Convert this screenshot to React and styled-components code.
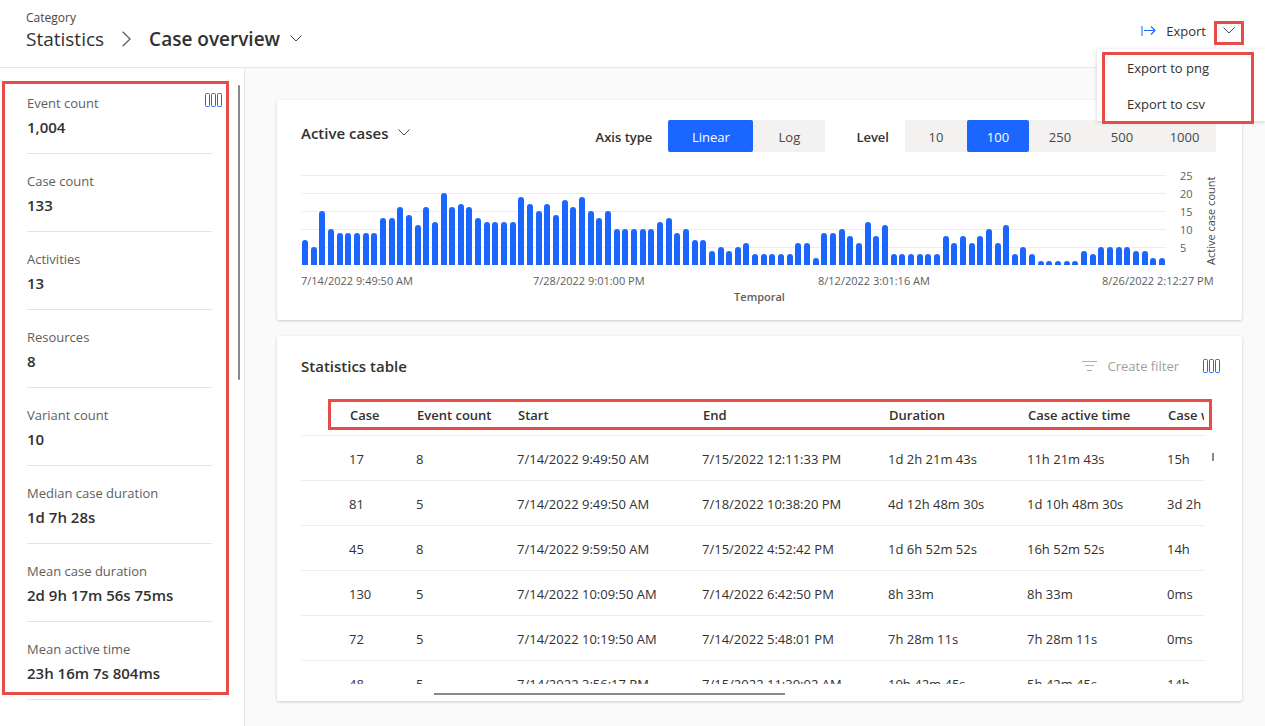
import React from 'react';
import styled, { createGlobalStyle } from 'styled-components';

const stats = [
  { label: 'Event count', value: '1,004' },
  { label: 'Case count', value: '133' },
  { label: 'Activities', value: '13' },
  { label: 'Resources', value: '8' },
  { label: 'Variant count', value: '10' },
  { label: 'Median case duration', value: '1d 7h 28s' },
  { label: 'Mean case duration', value: '2d 9h 17m 56s 75ms' },
  { label: 'Mean active time', value: '23h 16m 7s 804ms' }
];

const activeCases = [
  7, 5, 15, 10, 9, 9, 9, 9, 9, 13, 13, 16, 14, 11, 16, 12, 20, 16, 17, 16,
  13, 12, 12, 12, 12, 19, 17, 15, 17, 14, 18, 16, 19, 15, 13, 15, 10, 10, 10, 10,
  10, 12, 13, 9, 10, 7, 7, 4, 5, 4, 5, 6, 3, 3, 3, 3, 3, 6, 6, 2,
  9, 9, 10, 8, 6, 12, 8, 11, 3, 3, 3, 3, 3, 3, 8, 6, 8, 6, 8, 10,
  6, 11, 3, 5, 3, 1, 1, 1, 1, 1, 4, 3, 5, 5, 5, 5, 4, 4, 2, 2
];

const maxCount = 25;
const countTicks = [25, 20, 15, 10, 5];
const timeTicks = [
  '7/14/2022 9:49:50 AM',
  '7/28/2022 9:01:00 PM',
  '8/12/2022 3:01:16 AM',
  '8/26/2022 2:12:27 PM'
];

const columns = [
  { title: 'Case', width: 67 },
  { title: 'Event count', width: 101 },
  { title: 'Start', width: 185 },
  { title: 'End', width: 186 },
  { title: 'Duration', width: 139 },
  { title: 'Case active time', width: 140 },
  { title: 'Case waiting time', width: 150 }
];

const rows = [
  ['17', '8', '7/14/2022 9:49:50 AM', '7/15/2022 12:11:33 PM', '1d 2h 21m 43s', '11h 21m 43s', '15h'],
  ['81', '5', '7/14/2022 9:49:50 AM', '7/18/2022 10:38:20 PM', '4d 12h 48m 30s', '1d 10h 48m 30s', '3d 2h'],
  ['45', '8', '7/14/2022 9:59:50 AM', '7/15/2022 4:52:42 PM', '1d 6h 52m 52s', '16h 52m 52s', '14h'],
  ['130', '5', '7/14/2022 10:09:50 AM', '7/14/2022 6:42:50 PM', '8h 33m', '8h 33m', '0ms'],
  ['72', '5', '7/14/2022 10:19:50 AM', '7/14/2022 5:48:01 PM', '7h 28m 11s', '7h 28m 11s', '0ms'],
  ['48', '5', '7/14/2022 3:56:17 PM', '7/15/2022 11:39:02 AM', '19h 42m 45s', '5h 42m 45s', '14h']
];

const ChevronDown = () => (
  <svg width="12" height="7" viewBox="0 0 12 7" fill="none" stroke="#484644">
    <path d="M0.5 0.5 L6 6 L11.5 0.5" />
  </svg>
);

const ChevronRight = () => (
  <svg width="9" height="16" viewBox="0 0 9 16" fill="none" stroke="#605e5c" strokeWidth="1.3">
    <path d="M0.7 0.7 L8 8 L0.7 15.3" />
  </svg>
);

const ColumnsIcon = () => (
  <svg width="17" height="14" viewBox="0 0 17 14" fill="none" stroke="#1a66ff">
    <rect x="0.5" y="0.5" width="4" height="13" rx="1" />
    <rect x="6.5" y="0.5" width="4" height="13" rx="1" />
    <rect x="12.5" y="0.5" width="4" height="13" rx="1" />
  </svg>
);

const ExportIcon = () => (
  <svg width="15" height="10" viewBox="0 0 15 10" fill="none" stroke="#1a66ff">
    <path d="M1 0 V10" strokeOpacity="0.7" strokeWidth="1.5" />
    <path d="M3 4.5 H14 M10 0.5 L14 4.5 L10 8.5" strokeWidth="1.1" />
  </svg>
);

const FilterIcon = () => (
  <svg width="15" height="10" viewBox="0 0 15 10" fill="none" stroke="#b3b0ad">
    <path d="M0 0.5 H15 M3 4.5 H12 M5 9.5 H10" />
  </svg>
);

export default function App() {
  return (
    <>
      <GlobalStyle />
      <AppWrapper>
        <Header>
          <Breadcrumb>
            <Category>Category</Category>
            <Crumbs>
              <CrumbLink href="#statistics">Statistics</CrumbLink>
              <ChevronRight />
              <PageTitle>
                Case overview
                <ChevronButton aria-label="Switch page">
                  <ChevronDown />
                </ChevronButton>
              </PageTitle>
            </Crumbs>
          </Breadcrumb>
          <ExportGroup>
            <ExportButton>
              <ExportIcon />
              Export
            </ExportButton>
            <ExportToggle aria-label="Export options">
              <ChevronDown />
            </ExportToggle>
            <ExportMenu>
              <MenuItem>Export to png</MenuItem>
              <MenuItem>Export to csv</MenuItem>
              <MenuHighlight />
            </ExportMenu>
          </ExportGroup>
        </Header>
        <Body>
          <Sidebar>
            <SidebarColumns aria-label="Customize statistics">
              <ColumnsIcon />
            </SidebarColumns>
            <StatList>
              {stats.map(({ label, value }) => (
                <Stat key={label}>
                  <StatLabel>{label}</StatLabel>
                  <StatValue>{value}</StatValue>
                </Stat>
              ))}
            </StatList>
            <SidebarThumb />
            <SidebarHighlight />
          </Sidebar>
          <Main>
            <Card>
              <ChartHeader>
                <CardTitle>
                  Active cases
                  <ChevronButton aria-label="Switch metric">
                    <ChevronDown />
                  </ChevronButton>
                </CardTitle>
                <Controls>
                  <Control role="group" aria-labelledby="axis-type">
                    <ControlLabel id="axis-type">Axis type</ControlLabel>
                    <Segments>
                      <Segment $width={85} $active aria-pressed="true">Linear</Segment>
                      <Segment $width={72} aria-pressed="false">Log</Segment>
                    </Segments>
                  </Control>
                  <Control role="group" aria-labelledby="level">
                    <ControlLabel id="level">Level</ControlLabel>
                    <Segments>
                      {[10, 100, 250, 500, 1000].map(level => (
                        <Segment
                          key={level}
                          $width={level === 1000 ? 63 : 62}
                          $active={level === 100}
                          aria-pressed={level === 100}
                        >
                          {level}
                        </Segment>
                      ))}
                    </Segments>
                  </Control>
                </Controls>
              </ChartHeader>
              <Chart>
                <Plot>
                  {activeCases.map((count, i) => (
                    <Bar key={i} style={{ height: `${(count / maxCount) * 100}%` }} />
                  ))}
                </Plot>
                <CountAxis>
                  {countTicks.map(tick => (
                    <CountTick key={tick}>{tick}</CountTick>
                  ))}
                </CountAxis>
                <CountTitle>Active case count</CountTitle>
              </Chart>
              <TimeAxis>
                {timeTicks.map(tick => (
                  <span key={tick}>{tick}</span>
                ))}
              </TimeAxis>
              <TimeTitle>Temporal</TimeTitle>
            </Card>
            <Card>
              <TableHeader>
                <CardTitle>Statistics table</CardTitle>
                <TableActions>
                  <FilterButton disabled>
                    <FilterIcon />
                    Create filter
                  </FilterButton>
                  <IconButton aria-label="Customize columns">
                    <ColumnsIcon />
                  </IconButton>
                </TableActions>
              </TableHeader>
              <TableArea>
                <TableViewport>
                  <Table>
                    <colgroup>
                      <Col $width={48} />
                      {columns.map(({ title, width }) => (
                        <Col key={title} $width={width} />
                      ))}
                    </colgroup>
                    <thead>
                      <tr>
                        <td />
                        {columns.map(({ title }) => (
                          <Th key={title} scope="col">{title}</Th>
                        ))}
                      </tr>
                    </thead>
                    <tbody>
                      {rows.map(row => (
                        <Row key={row[0]}>
                          <td />
                          {row.map((cell, i) => (
                            <td key={i}>{cell}</td>
                          ))}
                        </Row>
                      ))}
                    </tbody>
                  </Table>
                </TableViewport>
                <HorizontalThumb />
                <VerticalThumb />
                <TableHighlight />
              </TableArea>
            </Card>
          </Main>
        </Body>
      </AppWrapper>
    </>
  );
}

const GlobalStyle = createGlobalStyle`
  * {
    box-sizing: border-box;
  }
  body {
    margin: 0;
    font-family: 'Open Sans', 'Noto Sans', sans-serif;
    font-size: 13px;
    line-height: 20px;
    color: #323130;
    background: #fafafa;
  }
  button {
    padding: 0;
    border: 0;
    background: none;
    color: inherit;
    font: inherit;
    cursor: pointer;
  }
  svg {
    display: block;
    flex: none;
  }
`;

// red callout frames laid over the parts being pointed at
const Highlight = styled.div`
  position: absolute;
  border: 3px solid #e84c48;
  pointer-events: none;
`;

const AppWrapper = styled.div`
  display: flex;
  flex-direction: column;
  min-height: 100vh;
  overflow: hidden;
`;

const Header = styled.header`
  display: flex;
  justify-content: space-between;
  align-items: flex-start;
  height: 68px;
  padding: 10px 21px 0 26px;
  border-bottom: 1px solid #e8e8e8;
  background: #fff;
`;

const Breadcrumb = styled.nav`
  display: flex;
  flex-direction: column;
`;

const Category = styled.span`
  font-size: 12px;
  line-height: 16px;
  color: #484644;
`;

const Crumbs = styled.div`
  display: flex;
  align-items: center;
  gap: 18px;
  font-size: 19px;
  line-height: 26px;
`;

const CrumbLink = styled.a`
  color: inherit;
  text-decoration: none;
`;

const PageTitle = styled.h1`
  display: flex;
  align-items: center;
  gap: 10px;
  margin: 0;
  font-size: 19px;
  font-weight: 600;
`;

const IconButton = styled.button`
  display: flex;
  align-items: center;
  justify-content: center;
`;

const ChevronButton = styled(IconButton)`
  padding-bottom: 2px;
`;

const ExportGroup = styled.div`
  position: relative;
  display: flex;
  align-items: flex-start;
  gap: 8px;
  padding-top: 11px;
`;

const ExportButton = styled.button`
  display: flex;
  align-items: center;
  gap: 10px;
`;

const ExportToggle = styled(IconButton)`
  width: 30px;
  height: 24px;
  padding-bottom: 6px;
  border: 3px solid #e84c48;
`;

const ExportMenu = styled.div`
  position: absolute;
  top: 39px;
  right: -21px;
  z-index: 1;
  display: flex;
  flex-direction: column;
  width: 168px;
  background: #fff;
  box-shadow: 0 1px 4px rgba(0, 0, 0, 0.18);
`;

const MenuItem = styled.button`
  height: 36px;
  padding: 2px 30px 0;
  text-align: left;
`;

const MenuHighlight = styled(Highlight)`
  inset: 3px 11px -3px 5px;
`;

const Body = styled.div`
  display: flex;
  flex: 1;
`;

const Sidebar = styled.aside`
  position: relative;
  width: 245px;
  flex: none;
  padding: 8px 32px 0 27px;
  border-right: 1px solid #e8e8e8;
  background: #fff;
`;

const SidebarColumns = styled(IconButton)`
  position: absolute;
  top: 25px;
  right: 22px;
`;

const StatList = styled.dl`
  margin: 0;
`;

const Stat = styled.div`
  height: 78px;
  padding-top: 17px;
  border-bottom: 1px solid #e5e5e5;
`;

const StatLabel = styled.dt`
  color: #605e5c;
`;

const StatValue = styled.dd`
  margin: 4px 0 0;
  font-size: 15px;
  font-weight: 600;
`;

const SidebarThumb = styled.div`
  position: absolute;
  top: 17px;
  right: 4px;
  width: 2px;
  height: 295px;
  border-radius: 1px;
  background: #8a8886;
`;

const SidebarHighlight = styled(Highlight)`
  top: 13px;
  left: 2px;
  right: 15px;
  height: 614px;
`;

const Main = styled.main`
  display: flex;
  flex-direction: column;
  flex: 1;
  min-width: 0;
  gap: 16px;
  padding: 32px 23px 24px 32px;
`;

const Card = styled.section`
  padding: 20px 24px 17px;
  border-radius: 2px;
  background: #fff;
  box-shadow: 0 1px 3px rgba(0, 0, 0, 0.2);
`;

const ChartHeader = styled.div`
  display: flex;
  justify-content: space-between;
  align-items: flex-start;
`;

const CardTitle = styled.h2`
  display: flex;
  align-items: center;
  gap: 10px;
  margin: 0;
  font-size: 15px;
  font-weight: 600;
  line-height: 26px;
`;

const Controls = styled.div`
  display: flex;
  gap: 31px;
  padding-right: 2px;
`;

const Control = styled.div`
  display: flex;
  align-items: center;
  gap: 16px;
`;

const ControlLabel = styled.span`
  padding-top: 2px;
  font-weight: 600;
`;

const Segments = styled.div`
  display: flex;
  border-radius: 2px;
  background: #f3f2f1;
`;

const Segment = styled.button`
  width: ${props => props.$width}px;
  height: 32px;
  padding-top: 2px;
  border-radius: 2px;
  background: ${props => (props.$active ? '#1a66ff' : 'transparent')};
  color: ${props => (props.$active ? '#fff' : '#484644')};
`;

const Chart = styled.div`
  display: flex;
  margin-top: 23px;
`;

const Plot = styled.div`
  display: flex;
  flex: 1;
  justify-content: space-between;
  align-items: flex-end;
  height: 90px;
  padding: 0 1px;
  background: repeating-linear-gradient(#ededed 0 1px, transparent 1px 18px);
`;

const Bar = styled.div`
  width: 6px;
  border-radius: 3px 3px 0 0;
  background: #1a66ff;
`;

const CountAxis = styled.div`
  display: flex;
  flex-direction: column;
  width: 38px;
  margin-top: -8px;
  padding-left: 14px;
`;

const CountTick = styled.span`
  font-size: 11px;
  line-height: 18px;
  color: #605e5c;
`;

const CountTitle = styled.span`
  height: 90px;
  writing-mode: vertical-rl;
  transform: rotate(180deg);
  white-space: nowrap;
  font-size: 11px;
  line-height: 14px;
  color: #484644;
`;

const TimeAxis = styled.div`
  display: grid;
  grid-template-columns: 232fr 285fr 284fr 116fr;
  margin-top: 6px;
  white-space: nowrap;
  font-size: 11px;
  color: #605e5c;
`;

const TimeTitle = styled.div`
  text-align: center;
  font-size: 11px;
  font-weight: 600;
  line-height: 12px;
  color: #605e5c;
`;

const TableHeader = styled.div`
  display: flex;
  justify-content: space-between;
  align-items: center;
  height: 20px;
`;

const TableActions = styled.div`
  display: flex;
  align-items: center;
  gap: 24px;
  margin-right: -2px;
`;

const FilterButton = styled.button`
  display: flex;
  align-items: center;
  gap: 10px;
  color: #a19f9d;
`;

const TableArea = styled.div`
  position: relative;
  margin: 24px 14px 0 0;
`;

const TableViewport = styled.div`
  height: 284px;
  overflow: hidden;
`;

const Table = styled.table`
  width: 1016px;
  table-layout: fixed;
  border-collapse: collapse;
`;

const Col = styled.col`
  width: ${props => props.$width}px;
`;

const Th = styled.th`
  height: 35px;
  padding: 0 0 4px 1px;
  text-align: left;
  font-weight: 600;
  white-space: nowrap;
`;

const Row = styled.tr`
  height: 45px;
  border-top: 1px solid #ededed;
  td {
    padding: 2px 0 0;
  }
`;

const HorizontalThumb = styled.div`
  position: absolute;
  left: 133px;
  bottom: -11px;
  width: 351px;
  height: 2px;
  background: #8a8886;
`;

const VerticalThumb = styled.div`
  position: absolute;
  top: 53px;
  right: -10px;
  width: 2px;
  height: 8px;
  background: #8a8886;
`;

const TableHighlight = styled(Highlight)`
  top: -1px;
  left: 27px;
  right: -8px;
  height: 31px;
`;
